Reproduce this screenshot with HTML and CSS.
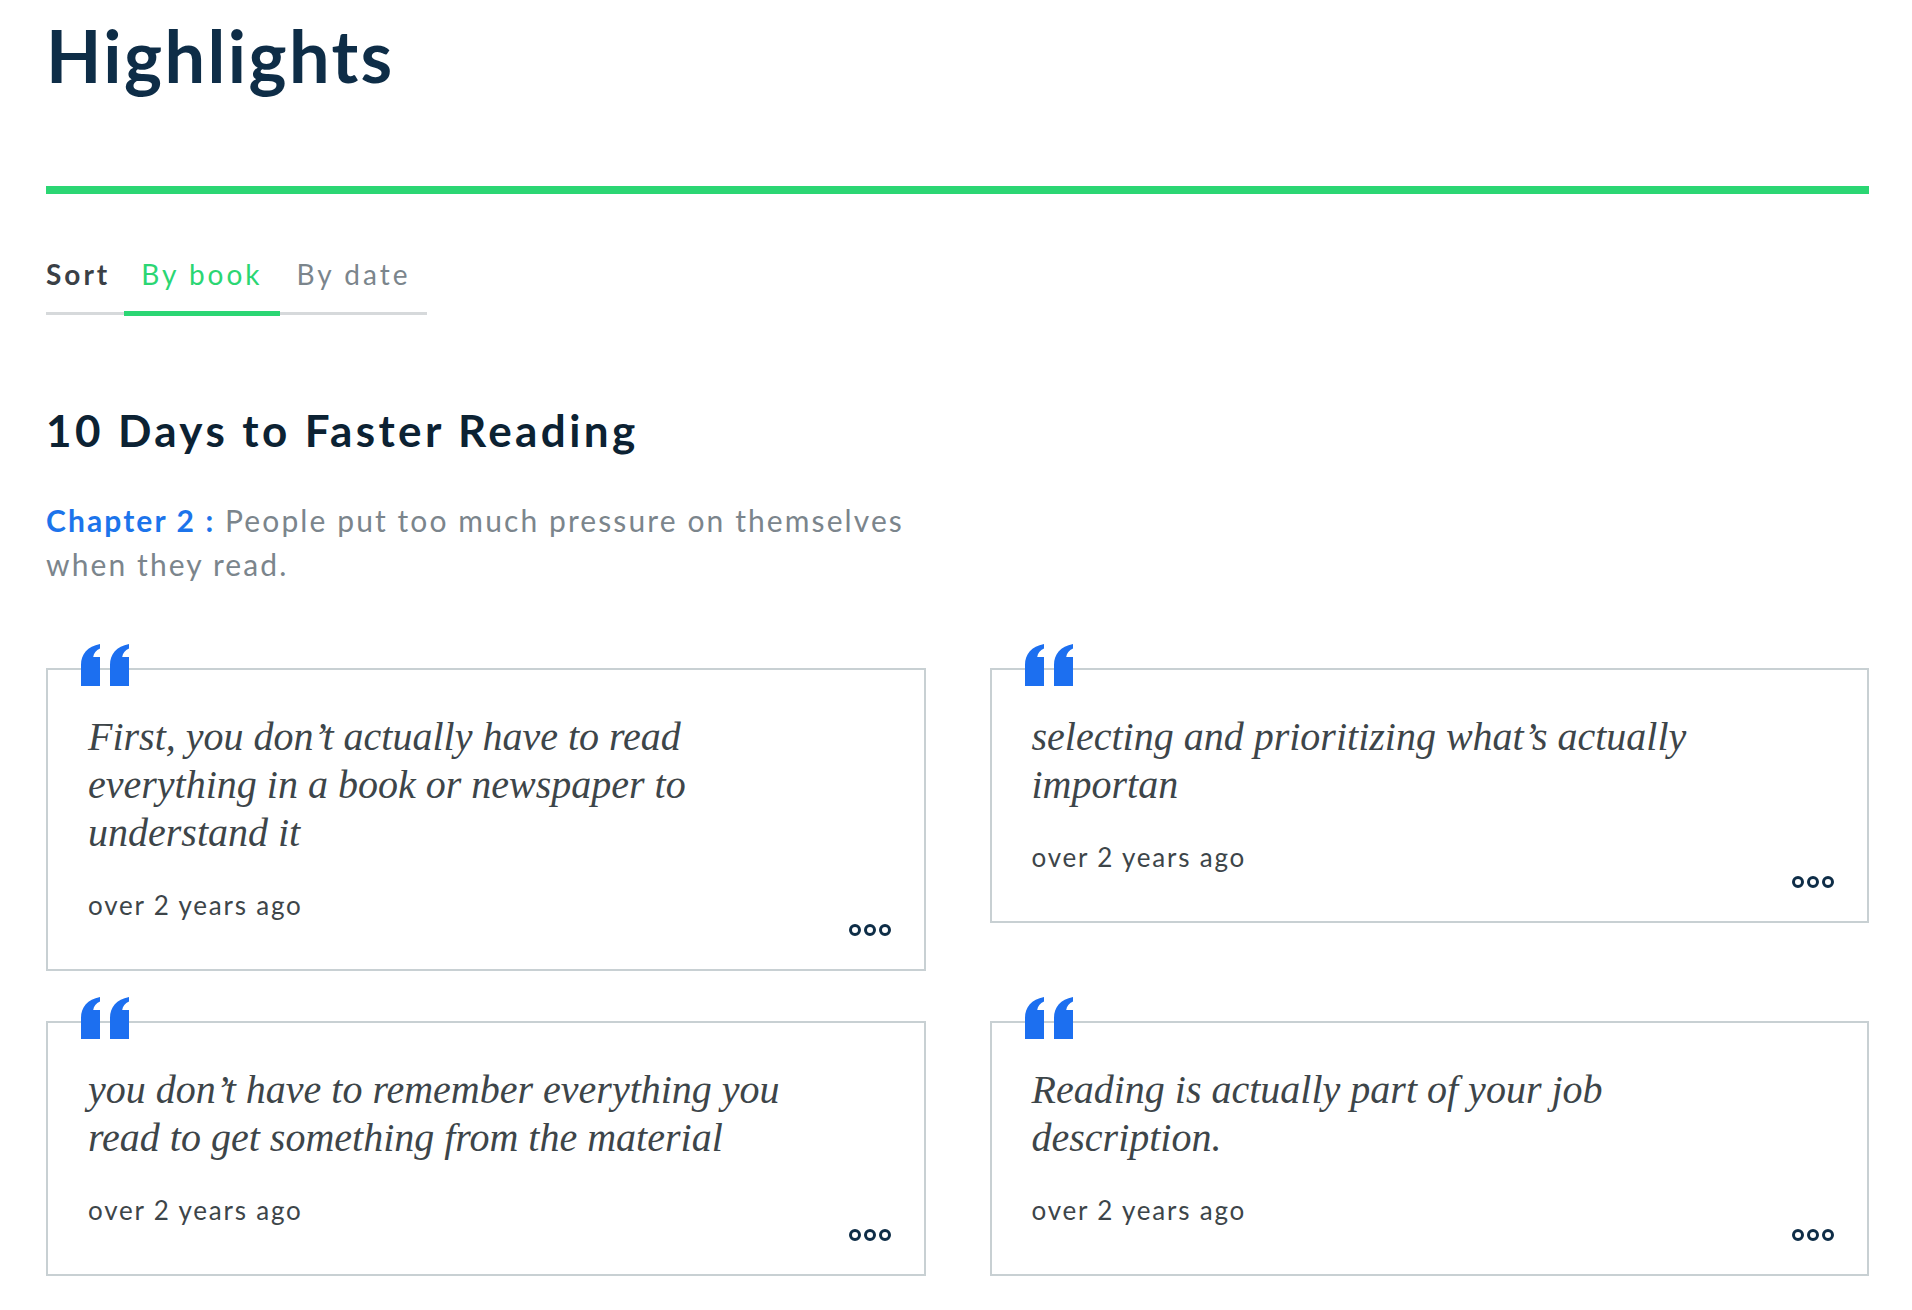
FILE: index.html
```html
<!DOCTYPE html>
<html>
<head>
<meta charset="utf-8">
<title>Highlights</title>
<link rel="stylesheet" href="styles.css">
</head>
<body>
<div class="page">
    <h1 class="page-title">Highlights</h1>
    <div class="title-rule"></div>

    <ul class="sort-tabs">
        <li class="sort-label">Sort</li>
        <li class="sort-tab active">By book</li>
        <li class="sort-tab">By date</li>
    </ul>

    <h2 class="book-title">10 Days to Faster Reading</h2>
    <p class="chapter"><span class="chapter-name">Chapter 2 :</span> People put too much pressure on themselves when they read.</p>

    <div class="highlight-grid">
        <div class="highlight-card">
            <svg class="quote-mark" width="48" height="42" viewBox="0 0 48 42"><path d="M19 0v4.5c-4 1.8-6.2 4.6-6.8 8.5H19v29H0V21C0 10 6.5 2.5 19 0zM48 0v4.5c-4 1.8-6.2 4.6-6.8 8.5H48v29H29V21C29 10 35.5 2.5 48 0z"/></svg>
            <p class="highlight-text">First, you don’t actually have to read everything in a book or newspaper to understand it</p>
            <p class="highlight-date">over 2 years ago</p>
            <div class="highlight-actions">
                <svg width="42" height="12" viewBox="0 0 42 12"><circle cx="6" cy="6" r="4.5"/><circle cx="21" cy="6" r="4.5"/><circle cx="36" cy="6" r="4.5"/></svg>
            </div>
        </div>

        <div class="highlight-card">
            <svg class="quote-mark" width="48" height="42" viewBox="0 0 48 42"><path d="M19 0v4.5c-4 1.8-6.2 4.6-6.8 8.5H19v29H0V21C0 10 6.5 2.5 19 0zM48 0v4.5c-4 1.8-6.2 4.6-6.8 8.5H48v29H29V21C29 10 35.5 2.5 48 0z"/></svg>
            <p class="highlight-text">selecting and prioritizing what’s actually importan</p>
            <p class="highlight-date">over 2 years ago</p>
            <div class="highlight-actions">
                <svg width="42" height="12" viewBox="0 0 42 12"><circle cx="6" cy="6" r="4.5"/><circle cx="21" cy="6" r="4.5"/><circle cx="36" cy="6" r="4.5"/></svg>
            </div>
        </div>

        <div class="highlight-card">
            <svg class="quote-mark" width="48" height="42" viewBox="0 0 48 42"><path d="M19 0v4.5c-4 1.8-6.2 4.6-6.8 8.5H19v29H0V21C0 10 6.5 2.5 19 0zM48 0v4.5c-4 1.8-6.2 4.6-6.8 8.5H48v29H29V21C29 10 35.5 2.5 48 0z"/></svg>
            <p class="highlight-text">you don’t have to remember everything you read to get something from the material</p>
            <p class="highlight-date">over 2 years ago</p>
            <div class="highlight-actions">
                <svg width="42" height="12" viewBox="0 0 42 12"><circle cx="6" cy="6" r="4.5"/><circle cx="21" cy="6" r="4.5"/><circle cx="36" cy="6" r="4.5"/></svg>
            </div>
        </div>

        <div class="highlight-card">
            <svg class="quote-mark" width="48" height="42" viewBox="0 0 48 42"><path d="M19 0v4.5c-4 1.8-6.2 4.6-6.8 8.5H19v29H0V21C0 10 6.5 2.5 19 0zM48 0v4.5c-4 1.8-6.2 4.6-6.8 8.5H48v29H29V21C29 10 35.5 2.5 48 0z"/></svg>
            <p class="highlight-text">Reading is actually part of your job description.</p>
            <p class="highlight-date">over 2 years ago</p>
            <div class="highlight-actions">
                <svg width="42" height="12" viewBox="0 0 42 12"><circle cx="6" cy="6" r="4.5"/><circle cx="21" cy="6" r="4.5"/><circle cx="36" cy="6" r="4.5"/></svg>
            </div>
        </div>
    </div>
</div>
</body>
</html>
```

FILE: styles.css
```css
/* base */
body {
    margin: 0;
    background: #ffffff;
    font-family: 'Lato', 'Open Sans', sans-serif;
    color: #3d4549;
}

.page {
    padding: 0 43px 40px 46px;
}

/* heading */
.page-title {
    margin: 19px 0 0;
    font-size: 72px;
    line-height: 72px;
    font-weight: 700;
    letter-spacing: 2.4px;
    color: #0e2d47;
}

.title-rule {
    height: 8px;
    margin-top: 95px;
    background: #2bd673;
}

/* sort tabs */
.sort-tabs {
    display: inline-flex;
    margin: 66px 0 0;
    padding: 0;
    list-style: none;
    border-bottom: 3px solid #d6d9db;
    font-size: 28px;
    line-height: 28px;
    letter-spacing: 3px;
}

.sort-tabs li {
    padding: 0 17px 23px;
    margin-bottom: -4px;
    border-bottom: 5px solid transparent;
}

.sort-label {
    font-weight: 700;
    color: #3a4046;
}

.sort-tabs .sort-label {
    padding-left: 0;
    padding-right: 14px;
}

.sort-tab {
    color: #7b858c;
    cursor: pointer;
}

.sort-tabs .sort-tab.active {
    color: #2bd673;
    border-bottom-color: #2bd673;
}

/* book */
.book-title {
    margin: 94px 0 0;
    font-size: 44px;
    line-height: 42px;
    font-weight: 700;
    letter-spacing: 3.4px;
    color: #0c2233;
}

.chapter {
    max-width: 920px;
    margin: 47px 0 0;
    font-size: 30px;
    line-height: 44px;
    letter-spacing: 2.1px;
    color: #7b858c;
}

.chapter-name {
    font-weight: 700;
    color: #1c74eb;
}

/* highlight cards */
.highlight-grid {
    display: grid;
    grid-template-columns: 1fr 1fr;
    column-gap: 64px;
    row-gap: 50px;
    align-items: start;
    margin-top: 82px;
}

.highlight-card {
    position: relative;
    border: 2px solid #c8d0d3;
    padding: 43px 33px 33px 40px;
}

.quote-mark {
    position: absolute;
    top: -26px;
    left: 33px;
    fill: #1c6ff0;
}

.highlight-text {
    max-width: 740px;
    margin: 0;
    font-family: 'Liberation Serif', 'Times New Roman', serif;
    font-style: italic;
    font-size: 40px;
    line-height: 48px;
    color: #3d4549;
}

.highlight-date {
    margin: 33px 0 0;
    font-size: 26px;
    line-height: 30px;
    letter-spacing: 1.8px;
    color: #3d4549;
}

.highlight-actions {
    display: flex;
    justify-content: flex-end;
    margin-top: 4px;
}

.highlight-actions svg {
    display: block;
    fill: none;
    stroke: #0e2d47;
    stroke-width: 3;
    cursor: pointer;
}
```
